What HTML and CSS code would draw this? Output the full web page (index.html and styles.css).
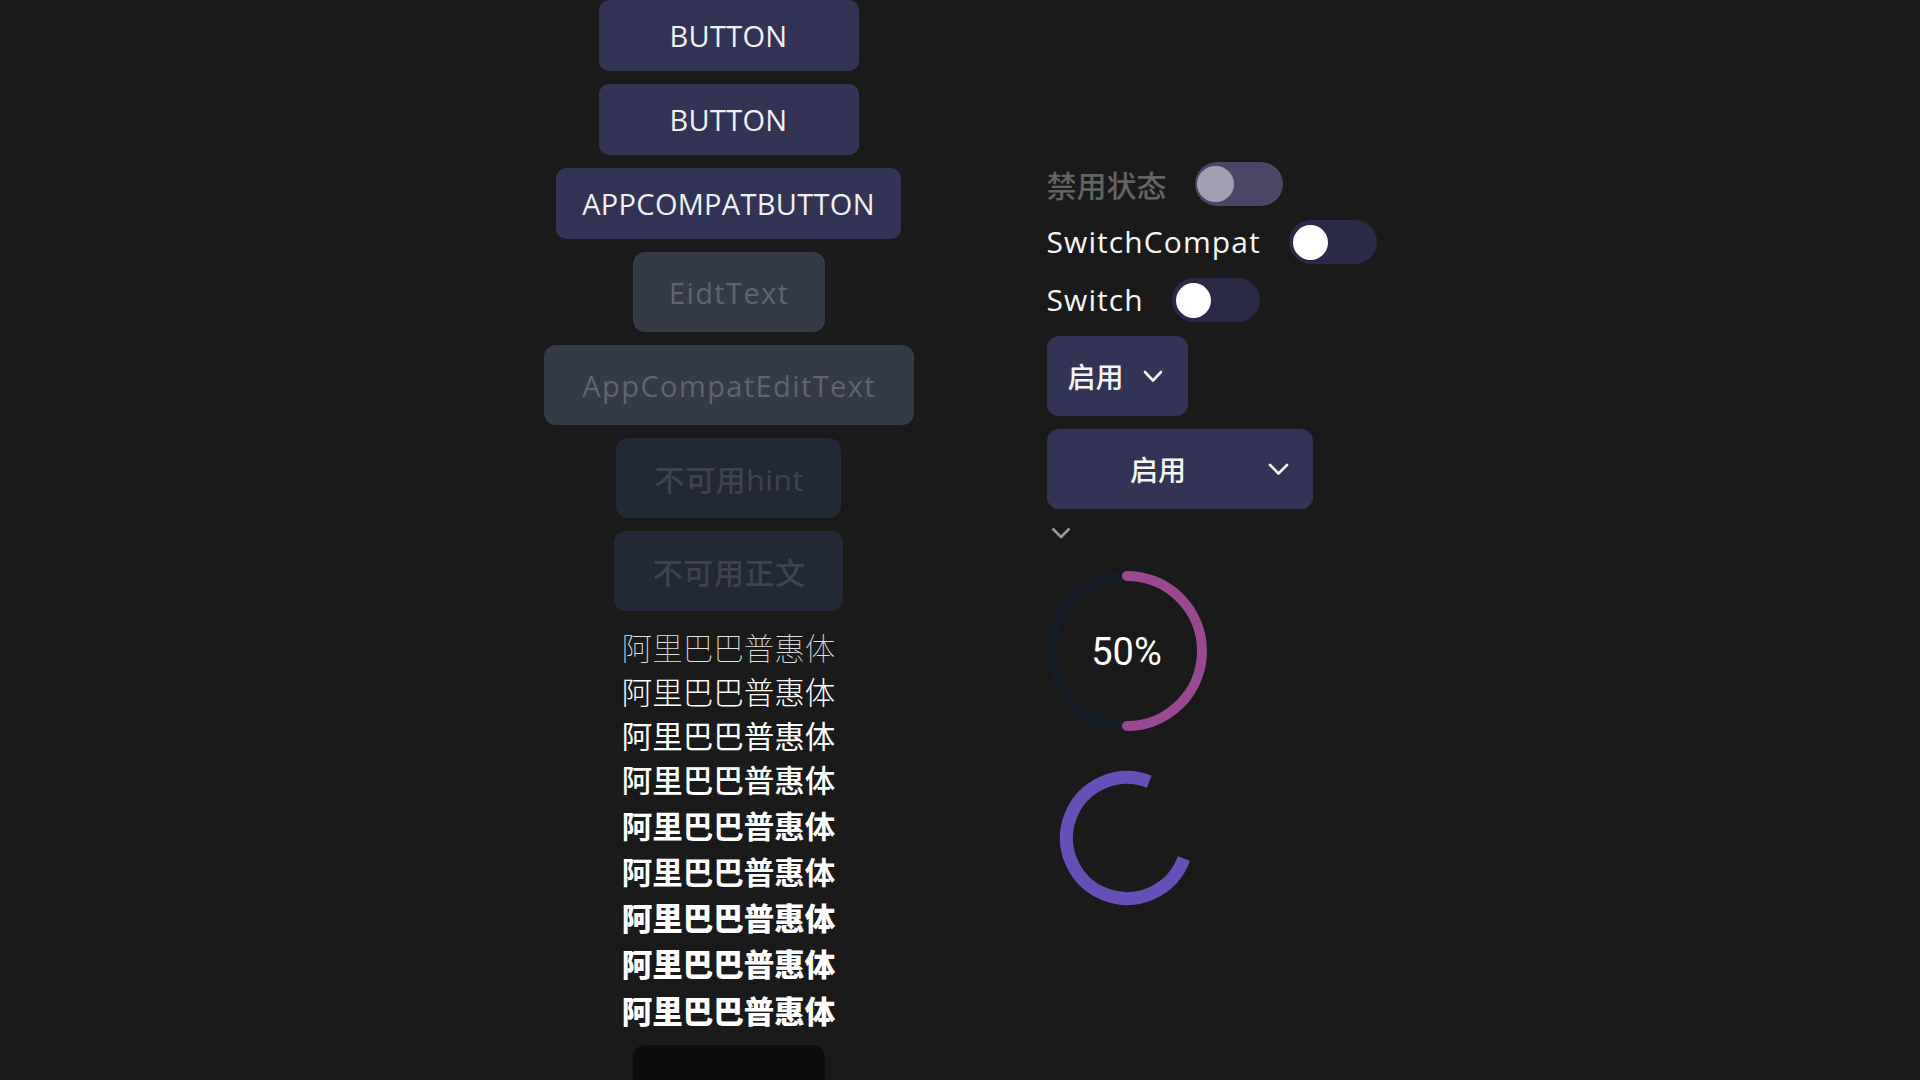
FILE: index.html
```html
<!DOCTYPE html>
<html lang="zh">
<head>
<meta charset="utf-8">
<title>Widgets</title>
<link rel="stylesheet" href="styles.css">
</head>
<body>
<div class="page">
  <div class="col-left">
    <div class="btn w260">BUTTON</div>
    <div class="btn w260">BUTTON</div>
    <div class="btn w345">APPCOMPATBUTTON</div>
    <div class="edit w192">EidtText</div>
    <div class="edit w370">AppCompatEditText</div>
    <div class="edit disabled w225">不可用hint</div>
    <div class="edit disabled w229">不可用正文</div>
    <div class="fonts">
      <div class="f f1">阿里巴巴普惠体</div>
      <div class="f f2">阿里巴巴普惠体</div>
      <div class="f f3">阿里巴巴普惠体</div>
      <div class="f f4">阿里巴巴普惠体</div>
      <div class="f f5">阿里巴巴普惠体</div>
      <div class="f f6">阿里巴巴普惠体</div>
      <div class="f f7">阿里巴巴普惠体</div>
      <div class="f f8">阿里巴巴普惠体</div>
      <div class="f f9">阿里巴巴普惠体</div>
    </div>
    <div class="dark-box"></div>
  </div>
  <div class="col-right">
    <div class="sw-row">
      <span class="sw-label muted">禁用状态</span>
      <span class="track track-disabled"><span class="thumb thumb-disabled"></span></span>
    </div>
    <div class="sw-row">
      <span class="sw-label">SwitchCompat</span>
      <span class="track"><span class="thumb"></span></span>
    </div>
    <div class="sw-row">
      <span class="sw-label">Switch</span>
      <span class="track"><span class="thumb"></span></span>
    </div>
    <div class="spinner sp1">
      <span class="sp-text">启用</span>
      <svg class="chev" width="20" height="13" viewBox="0 0 20 13"><polyline points="2,2 10,10.5 18,2" fill="none" stroke="#f2f2f2" stroke-width="2.6" stroke-linecap="round" stroke-linejoin="round"/></svg>
    </div>
    <div class="spinner sp2">
      <span class="sp-text grow">启用</span>
      <svg class="chev" width="21" height="13" viewBox="0 0 21 13"><polyline points="2,2 10.5,10.5 19,2" fill="none" stroke="#f2f2f2" stroke-width="2.6" stroke-linecap="round" stroke-linejoin="round"/></svg>
    </div>
    <svg class="small-chev" width="20" height="12" viewBox="0 0 20 12"><polyline points="1.5,1.5 10,10 18.5,1.5" fill="none" stroke="#9a9a9a" stroke-width="2.6" stroke-linejoin="round"/></svg>
    <div class="progress">
      <svg width="160" height="160" viewBox="0 0 160 160">
        <circle cx="80" cy="80" r="75" fill="none" stroke="#161d27" stroke-width="10"/>
        <path d="M80 5 A75 75 0 0 1 80 155" fill="none" stroke="#9b4892" stroke-width="10" stroke-linecap="round"/>
      </svg>
      <span class="pct">50%</span>
    </div>
    <svg class="indet" width="136" height="136" viewBox="0 0 136 136">
      <path d="M124.9 88.5 A60.5 60.5 0 1 1 90.2 11.7" fill="none" stroke="#6650b8" stroke-width="13"/>
    </svg>
  </div>
</div>
</body>
</html>
```
FILE: styles.css
```css
html, body {
  margin: 0;
  padding: 0;
  background: #1a1a1a;
  height: 1080px;
  overflow: hidden;
}
body {
  font-family: "Open Sans", "Noto Sans CJK SC", sans-serif;
  color: #f2f2f2;
}
.page {
  display: flex;
  justify-content: center;
  align-items: flex-start;
  gap: 133px;
}
.col-left {
  width: 370px;
  display: flex;
  flex-direction: column;
  align-items: center;
  gap: 13px;
}
.btn {
  height: 71px;
  background: #333355;
  border-radius: 10px;
  display: flex;
  align-items: center;
  justify-content: center;
  font-size: 29px;
  color: #f0f0f4;
  letter-spacing: 0.3px;
}
.w260 { width: 260px; }
.w345 { width: 345px; }
.w192 { width: 192px; }
.w370 { width: 370px; }
.w225 { width: 225px; }
.w229 { width: 229px; }
.edit {
  height: 80px;
  background: #353a47;
  border-radius: 12px;
  display: flex;
  align-items: center;
  justify-content: center;
  font-size: 29px;
  font-weight: 500;
  letter-spacing: 1.4px;
  text-indent: 1.4px;
  color: #5d6371;
}
.edit.disabled {
  background: #232836;
  color: #3e4351;
  font-size: 30px;
  letter-spacing: 0.6px;
}
.fonts {
  display: flex;
  flex-direction: column;
  align-items: center;
  font-family: "Noto Sans CJK SC", sans-serif;
  font-size: 30.5px;
  color: #ffffff;
  margin-top: 1px;
}
.f { white-space: nowrap; }
.f1 { font-weight: 100; line-height: 44px; color: #e2e2e2; }
.f2 { font-weight: 300; line-height: 44px; }
.f3 { font-weight: 400; line-height: 44px; }
.f4 { font-weight: 500; line-height: 45px; }
.f5 { font-weight: 600; line-height: 46px; }
.f6 { font-weight: 700; line-height: 46px; }
.f7 { font-weight: 800; line-height: 46px; }
.f8 { font-weight: 900; line-height: 47px; }
.f9 { font-weight: 900; line-height: 46px; }
.dark-box {
  width: 192px;
  height: 60px;
  background: #0d0d0d;
  border-radius: 12px;
  margin-top: -1px;
}
.col-right {
  width: 330px;
  padding-top: 162px;
  display: flex;
  flex-direction: column;
  align-items: flex-start;
}
.sw-row {
  display: flex;
  align-items: center;
  gap: 28px;
  height: 44px;
  margin-bottom: 14px;
}
.sw-label {
  font-size: 30px;
  font-weight: 500;
  letter-spacing: 1.1px;
  color: #f5f5f5;
  line-height: 44px;
  white-space: nowrap;
}
.sw-label.muted {
  color: #636363;
  font-family: "Noto Sans CJK SC", sans-serif;
  font-weight: 500;
  letter-spacing: 0;
}
.track {
  width: 88px;
  height: 44px;
  border-radius: 22px;
  background: #2a2947;
  display: flex;
  align-items: center;
  padding-left: 4px;
  box-sizing: border-box;
}
.track-disabled {
  background: #4a4667;
  padding-left: 2px;
}
.thumb {
  width: 35px;
  height: 35px;
  border-radius: 50%;
  background: #ffffff;
}
.thumb-disabled {
  width: 37px;
  height: 36px;
  background: #a39fb2;
}
.spinner {
  height: 80px;
  background: #333355;
  border-radius: 12px;
  display: flex;
  align-items: center;
  box-sizing: border-box;
  font-family: "Noto Sans CJK SC", sans-serif;
  font-size: 28px;
  font-weight: 500;
  color: #f5f5f5;
}
.sp1 {
  width: 141px;
  padding-left: 21px;
  gap: 19px;
  margin-bottom: 13px;
}
.sp2 {
  width: 266px;
  padding-right: 24px;
}
.sp2 .grow {
  flex: 1;
  text-align: center;
  padding-left: 2px;
}
.chev { display: block; }
.small-chev {
  display: block;
  margin-top: 18px;
  margin-left: 4px;
}
.progress {
  position: relative;
  width: 160px;
  height: 160px;
  margin-top: 32px;
}
.progress svg { display: block; }
.pct {
  position: absolute;
  left: 0;
  top: 0;
  width: 160px;
  height: 160px;
  display: flex;
  align-items: center;
  justify-content: center;
  font-family: "Roboto", sans-serif;
  font-size: 38px;
  color: #ffffff;
  padding-top: 2px;
  box-sizing: border-box;
}
.indet {
  display: block;
  margin-top: 39px;
  margin-left: 12px;
}
```
